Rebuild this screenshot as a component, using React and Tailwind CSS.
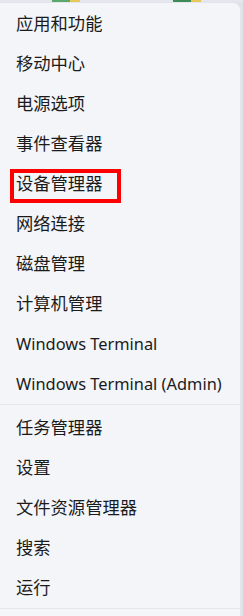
import React from "react";

const group1 = ["应用和功能", "移动中心", "电源选项", "事件查看器", "设备管理器", "网络连接", "磁盘管理", "计算机管理", "Windows Terminal", "Windows Terminal (Admin)"];
const group2 = ["任务管理器", "设置", "文件资源管理器", "搜索", "运行"];

function Item({ label, highlight }) {
  const latin = label.startsWith("Windows");
  return (
    <div className="relative h-[40px] flex items-center pl-[16px]">
      {highlight && (
        <div className="absolute left-[10px] top-[5px] w-[111px] h-[34px] border-[4px] border-[#ff0000]" />
      )}
      <span className={latin ? "relative text-[16.4px] leading-none text-[#1b1b1b]" : "relative text-[17.3px] leading-none text-[#1b1b1b]"}>{label}</span>
    </div>
  );
}

export default function App() {
  return (
    <div
      className="w-[243px] h-[616px] bg-[#dfe3e8] overflow-hidden"
      style={{ fontFamily: '"Segoe UI", "Noto Sans", "Noto Sans CJK SC", sans-serif' }}
    >
      <div className="flex h-[2px]">
        <div className="w-[52px] bg-[#e4e8ee]" />
        <div className="w-[18px] bg-[#5aa86a]" />
        <div className="w-[10px] bg-[#e8c85a]" />
        <div className="w-[93px] bg-[#e4e8ee]" />
        <div className="w-[18px] bg-[#3f8a5a]" />
        <div className="w-[10px] bg-[#e8c85a]" />
        <div className="flex-1 bg-[#e4e8ee]" />
      </div>
      <div className="w-[241px] h-[640px] bg-[#f3f5f9] rounded-tr-[8px] border-r border-t border-[#e2e5ea] pt-[1px]">
        {group1.map((l) => (
          <Item key={l} label={l} highlight={l === "设备管理器"} />
        ))}
        <div className="h-[1px] bg-[#e3e6eb] mb-[3px]" />
        {group2.map((l) => (
          <Item key={l} label={l} />
        ))}
        <div className="h-[1px] bg-[#e3e6eb]" />
      </div>
    </div>
  );
}
